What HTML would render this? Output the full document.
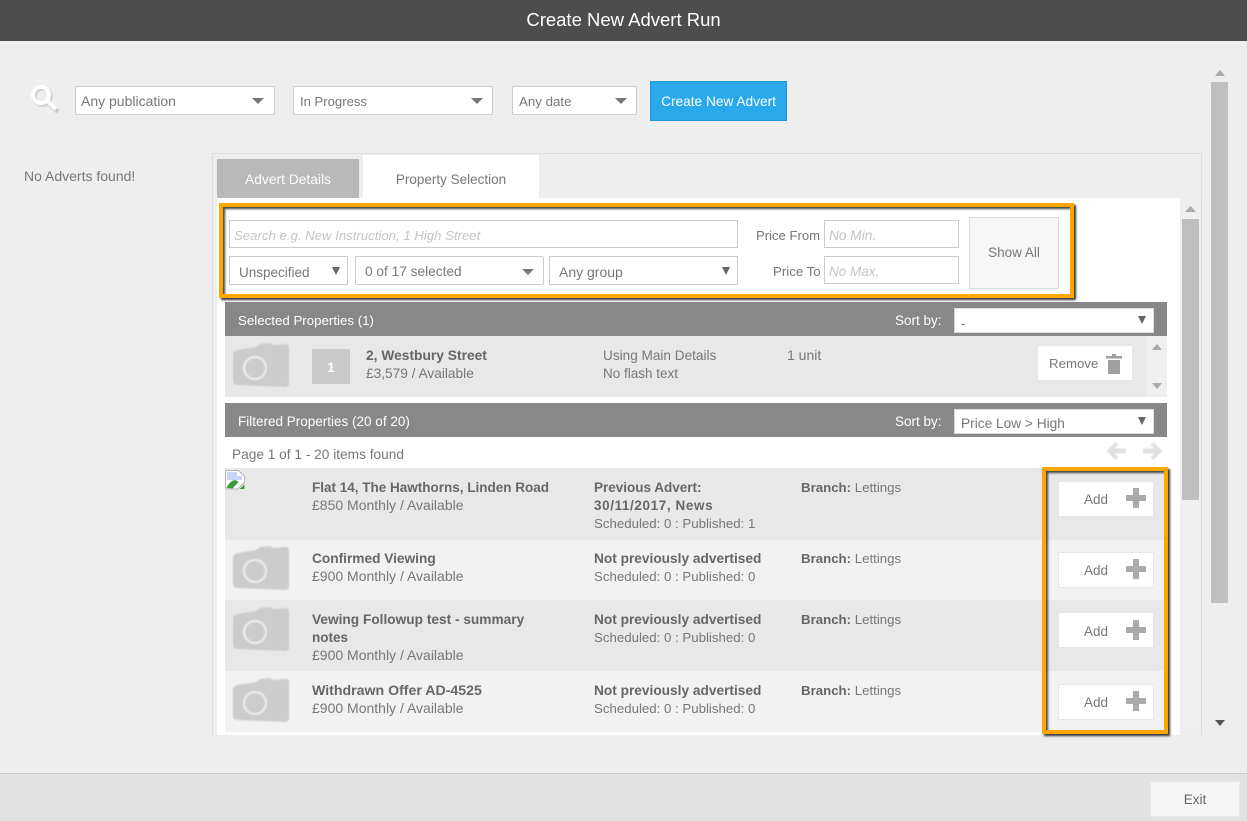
<!DOCTYPE html>
<html><head><meta charset="utf-8">
<style>
html,body{margin:0;padding:0}
body{width:1247px;height:821px;overflow:hidden;position:relative;background:#eee;font-family:"Liberation Sans",sans-serif;font-size:13.5px;color:#777}
div,span.a{position:absolute;box-sizing:border-box}
.t{white-space:nowrap;line-height:18px;margin-top:1px}
.b{font-weight:bold;color:#666}
.w{color:#fff}
.sel{background:#fff;border:1px solid #ccc;border-radius:2px}
.box{background:#fff;border:1px solid #ccc}
.ph{color:#c4c4c4;font-style:italic}
svg{position:absolute;display:block}
.btn{background:#fff;border:1px solid #e6e6e6}
.s14{font-size:14px;margin-top:0}
.s137{font-size:13.7px}
.s132{font-size:13.25px}
</style></head><body>
<svg width="0" height="0" style="position:absolute"><defs>
<filter id="bl"><feGaussianBlur stdDeviation="0.9"/></filter>
<filter id="bl2"><feGaussianBlur stdDeviation="0.5"/></filter>
<symbol id="cam" viewBox="0 0 58 46"><g filter="url(#bl)"><path d="M1 13 Q1 9 5 8 L24 5 L28 2 L38 1 L41 3 L54 2 Q57 2 57 6 L57 41 Q57 45 53 45 L6 43 Q1 43 1 39Z" fill="#ccc"/><circle cx="23" cy="26" r="11" fill="none" stroke="#eee" stroke-width="2"/></g></symbol>
<symbol id="plus" viewBox="0 0 20 20"><path d="M7 0h6v7h7v6h-7v7H7v-7H0V7h7z" fill="#aaa"/></symbol>
</defs></svg>

<div style="left:0;top:0;width:1247px;height:41px;background:#4d4d4d"></div>
<div class="t w" style="left:0;top:8px;width:1247px;text-align:center;font-size:18.500px;line-height:22px">Create New Advert Run</div>

<svg style="left:26px;top:80px" width="40" height="36" viewBox="0 0 40 36"><g filter="url(#bl)" opacity=".55"><circle cx="16.500" cy="16.500" r="8" fill="none" stroke="#aaa" stroke-width="4"/><path d="M22 23l10 9" stroke="#aaa" stroke-width="4"/></g><circle cx="15" cy="15" r="8" fill="none" stroke="#fff" stroke-width="4"/><path d="M21 21l9 8" stroke="#fff" stroke-width="4"/></svg>

<div class="sel" style="left:75px;top:86px;width:200px;height:29px"></div>
<div class="t s14" style="left:81px;top:92px">Any publication</div>
<svg style="left:252px;top:98px" width="12" height="6"><path d="M0 0h12L6 6z" fill="#777"/></svg>
<div class="sel" style="left:293px;top:86px;width:200px;height:29px"></div>
<div class="t" style="left:300px;top:92px;font-size:13.100px">In Progress</div>
<svg style="left:471px;top:98px" width="12" height="6"><path d="M0 0h12L6 6z" fill="#777"/></svg>
<div class="sel" style="left:512px;top:86px;width:125px;height:29px"></div>
<div class="t" style="left:519px;top:92px;font-size:13.300px">Any date</div>
<svg style="left:615px;top:98px" width="12" height="6"><path d="M0 0h12L6 6z" fill="#777"/></svg>
<div style="left:650px;top:81px;width:137px;height:40px;background:#29a9ec;border:1px solid #2196d6"></div>
<div class="t w s137" style="left:650px;top:92px;width:137px;text-align:center">Create New Advert</div>

<div class="t s14" style="left:24px;top:167px">No Adverts found!</div>

<div style="left:212px;top:153px;width:990px;height:582px;border:1px solid #ddd;border-bottom:0"></div>
<div style="left:217px;top:159px;width:142px;height:39px;background:#b9b9b9"></div>
<div class="t w" style="left:217px;top:170px;width:142px;text-align:center;font-size:13.800px">Advert Details</div>
<div style="left:363px;top:155px;width:176px;height:43px;background:#fff"></div>
<div class="t" style="left:363px;top:170px;width:176px;text-align:center">Property Selection</div>
<div style="left:217px;top:198px;width:963px;height:537px;background:#fff"></div>

<!-- inner scrollbar -->
<div style="left:1181px;top:198px;width:20px;height:537px;background:#efefef"></div>
<div style="left:1182px;top:219px;width:17px;height:281px;background:#bfbfbf"></div>
<svg style="left:1185px;top:206px" width="11" height="6"><path d="M0 6h11L5.500 0z" fill="#aaa"/></svg>
<!-- outer scrollbar -->
<div style="left:1211px;top:82px;width:17px;height:521px;background:#bfbfbf"></div>
<svg style="left:1215px;top:70px" width="10" height="6"><path d="M0 6h10L5 0z" fill="#aaa"/></svg>
<svg style="left:1215px;top:720px" width="10" height="6"><path d="M0 0h10L5 6z" fill="#555"/></svg>

<!-- filter -->
<div class="box" style="left:229px;top:220px;width:509px;height:28px"></div>
<div class="t ph" style="left:234px;top:226px;font-size:13.200px">Search e.g. New Instruction, 1 High Street</div>
<div class="box" style="left:229px;top:256px;width:119px;height:29px"></div>
<div class="t" style="left:239px;top:263px">Unspecified</div>
<svg style="left:332px;top:267px" width="8" height="8"><path d="M0 0h8L4 8z" fill="#666"/></svg>
<div class="sel" style="left:355px;top:256px;width:189px;height:29px"></div>
<div class="t s137" style="left:365px;top:262px">0 of 17 selected</div>
<svg style="left:522px;top:269px" width="12" height="6"><path d="M0 0h12L6 6z" fill="#777"/></svg>
<div class="box" style="left:549px;top:256px;width:189px;height:29px"></div>
<div class="t s14" style="left:559px;top:263px">Any group</div>
<svg style="left:722px;top:267px" width="8" height="8"><path d="M0 0h8L4 8z" fill="#666"/></svg>
<div class="t" style="left:756px;top:226px;font-size:13.100px">Price From</div>
<div class="t s132" style="left:773px;top:262px">Price To</div>
<div class="box" style="left:824px;top:220px;width:135px;height:28px"></div>
<div class="t ph" style="left:829px;top:226px;font-size:13.700px">No Min.</div>
<div class="box" style="left:824px;top:256px;width:135px;height:28px"></div>
<div class="t ph" style="left:829px;top:262px">No Max.</div>
<div style="left:969px;top:217px;width:90px;height:72px;background:#f6f6f6;border:1px solid #ddd"></div>
<div class="t" style="left:969px;top:243px;width:90px;text-align:center">Show All</div>

<!-- selected -->
<div style="left:225px;top:302px;width:942px;height:34px;background:#888"></div>
<div class="t w" style="left:238px;top:311px;font-size:13.300px">Selected Properties (1)</div>
<div class="t w" style="left:895px;top:311px">Sort by:</div>
<div class="box" style="left:954px;top:308px;width:200px;height:25px;border-color:#ddd"></div>
<div class="t" style="left:961px;top:314px">-</div>
<svg style="left:1138px;top:316px" width="8" height="8"><path d="M0 0h8L4 8z" fill="#666"/></svg>
<div style="left:225px;top:336px;width:921px;height:61px;background:#e8e8e8"></div>
<div style="left:1146px;top:336px;width:21px;height:61px;background:#efefef"></div>
<svg style="left:1152px;top:344px" width="10" height="6"><path d="M0 6h10L5 0z" fill="#aaa"/></svg>
<svg style="left:1152px;top:383px" width="10" height="6"><path d="M0 0h10L5 6z" fill="#aaa"/></svg>
<svg style="left:231.500px;top:342px" width="58" height="46"><use href="#cam"/></svg>
<div style="left:312px;top:349px;width:38px;height:35px;background:#c9c9c9"></div>
<div class="t w b" style="left:312px;top:358px;width:38px;text-align:center;color:#fff">1</div>
<div class="t b" style="left:366px;top:346px;font-size:13.800px">2, Westbury Street</div>
<div class="t s137" style="left:366px;top:364px">£3,579 / Available</div>
<div class="t" style="left:603px;top:346px;font-size:13.600px">Using Main Details</div>
<div class="t" style="left:603px;top:364px">No flash text</div>
<div class="t s14" style="left:787px;top:346px">1 unit</div>
<div class="btn" style="left:1037px;top:345px;width:96px;height:36px"></div>
<div class="t s132" style="left:1049px;top:354px">Remove</div>
<svg style="left:1106px;top:354px" width="17" height="20" viewBox="0 0 17 20"><path d="M0 2h6V0h4v2h6v2.500H0z M2 6h12v14H2z" fill="#a0a0a0"/></svg>

<!-- filtered -->
<div style="left:225px;top:403px;width:942px;height:34px;background:#888"></div>
<div class="t w" style="left:238px;top:412px">Filtered Properties (20 of 20)</div>
<div class="t w" style="left:895px;top:412px">Sort by:</div>
<div class="box" style="left:954px;top:409px;width:200px;height:25px;border-color:#ddd"></div>
<div class="t s137" style="left:961px;top:414px">Price Low &gt; High</div>
<svg style="left:1138px;top:417px" width="8" height="8"><path d="M0 0h8L4 8z" fill="#666"/></svg>
<div class="t s137" style="left:232px;top:445px">Page 1 of 1 - 20 items found</div>
<svg style="left:1106px;top:441px" width="20" height="20" viewBox="0 0 20 20"><path d="M9.500 1L.5 10l9 9 3-3-4-3.500H20v-5H8.500l4-3.500z" fill="#e0e0e0" filter="url(#bl2)"/></svg>
<svg style="left:1143px;top:441px" width="20" height="20" viewBox="0 0 20 20"><path d="M10.500 1l9 9-9 9-3-3 4-3.500H0v-5h11.500l-4-3.500z" fill="#e0e0e0" filter="url(#bl2)"/></svg>

<div style="left:225px;top:468px;width:942px;height:72px;background:#e8e8e8"></div>
<div style="left:225px;top:540px;width:942px;height:60px;background:#f2f2f2"></div>
<div style="left:225px;top:600px;width:942px;height:71px;background:#e8e8e8"></div>
<div style="left:225px;top:671px;width:942px;height:61px;background:#f2f2f2"></div>

<svg style="left:225px;top:470px" width="21" height="20" viewBox="0 0 21 20"><path d="M.5.500h13l6 6v6l-7 6.500H.5z" fill="#fff" stroke="#b5b5b5"/><path d="M2 2h10v4h5v4H2z" fill="#c6d8f4"/><path d="M1.500 18c2-5 6-8 9-8l3 2-6 6.500z" fill="#3c9a3c"/><path d="M14.500 19l5-4.500V19z" fill="#3c9a3c"/></svg>
<svg style="left:231.500px;top:545px" width="58" height="46"><use href="#cam"/></svg>
<svg style="left:231.500px;top:606px" width="58" height="46"><use href="#cam"/></svg>
<svg style="left:231.500px;top:677px" width="58" height="46"><use href="#cam"/></svg>

<div class="t b" style="left:312px;top:478px">Flat 14, The Hawthorns, Linden Road</div>
<div class="t s14" style="left:312px;top:496px">£850 Monthly / Available</div>
<div class="t b" style="left:594px;top:478px">Previous Advert:</div>
<div class="t b" style="left:594px;top:496px;letter-spacing:.6px">30/11/2017, News</div>
<div class="t s132" style="left:594px;top:514px">Scheduled: 0 : Published: 1</div>
<div class="t s132" style="left:801px;top:478px"><span class="b">Branch:</span> Lettings</div>

<div class="t b s137" style="left:312px;top:549px">Confirmed Viewing</div>
<div class="t s14" style="left:312px;top:567px">£900 Monthly / Available</div>
<div class="t b s137" style="left:594px;top:549px">Not previously advertised</div>
<div class="t s132" style="left:594px;top:567px">Scheduled: 0 : Published: 0</div>
<div class="t s132" style="left:801px;top:549px"><span class="b">Branch:</span> Lettings</div>

<div class="t b s137" style="left:312px;top:610px">Vewing Followup test - summary</div>
<div class="t b" style="left:312px;top:628px">notes</div>
<div class="t s14" style="left:312px;top:646px">£900 Monthly / Available</div>
<div class="t b s137" style="left:594px;top:610px">Not previously advertised</div>
<div class="t s132" style="left:594px;top:628px">Scheduled: 0 : Published: 0</div>
<div class="t s132" style="left:801px;top:610px"><span class="b">Branch:</span> Lettings</div>

<div class="t b" style="left:312px;top:681px;font-size:14.150px;margin-top:0">Withdrawn Offer AD-4525</div>
<div class="t s14" style="left:312px;top:699px">£900 Monthly / Available</div>
<div class="t b s137" style="left:594px;top:681px">Not previously advertised</div>
<div class="t s132" style="left:594px;top:699px">Scheduled: 0 : Published: 0</div>
<div class="t s132" style="left:801px;top:681px"><span class="b">Branch:</span> Lettings</div>

<div class="btn" style="left:1058px;top:481px;width:96px;height:36px"></div>
<div class="t" style="left:1084px;top:490px">Add</div>
<svg style="left:1126px;top:488px" width="20" height="20"><use href="#plus"/></svg>
<div class="btn" style="left:1058px;top:552px;width:96px;height:36px"></div>
<div class="t" style="left:1084px;top:561px">Add</div>
<svg style="left:1126px;top:559px" width="20" height="20"><use href="#plus"/></svg>
<div class="btn" style="left:1058px;top:612px;width:96px;height:36px"></div>
<div class="t" style="left:1084px;top:622px">Add</div>
<svg style="left:1126px;top:620px" width="20" height="20"><use href="#plus"/></svg>
<div class="btn" style="left:1058px;top:684px;width:96px;height:36px"></div>
<div class="t" style="left:1084px;top:693px">Add</div>
<svg style="left:1126px;top:691px" width="20" height="20"><use href="#plus"/></svg>

<!-- highlight boxes -->
<div style="left:219px;top:203px;width:855px;height:95px;border:4px solid #ffa500;box-shadow:2px 2px 2px #333,inset 2px 2px 2px #444"></div>
<div style="left:1042px;top:467px;width:126px;height:267px;border:4px solid #ffa500;box-shadow:2px 2px 2px #333,inset 2px 2px 2px #444"></div>

<!-- footer -->
<div style="left:0;top:773px;width:1247px;height:48px;background:#e2e2e2;border-top:1px solid #ccc"></div>
<div style="left:1150px;top:781px;width:90px;height:36px;background:#f5f5f5;border:1px solid #e9e9e9"></div>
<div class="t" style="left:1150px;top:790px;width:90px;text-align:center;color:#666">Exit</div>
</body></html>
